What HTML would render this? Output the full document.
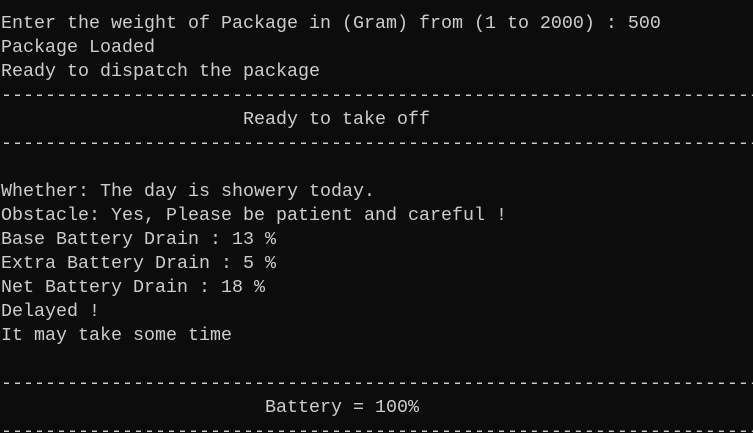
<!DOCTYPE html>
<html><head><meta charset="utf-8"><style>
html,body{margin:0;padding:0;background:#0c0c0c;width:753px;height:433px;overflow:hidden}
pre{margin:0;padding:12px 0 0 1px;font-family:"Liberation Mono",monospace;font-size:18.33px;line-height:24px;color:#cccccc;white-space:pre;overflow:hidden}
</style></head><body><pre>Enter the weight of Package in (Gram) from (1 to 2000) : 500
Package Loaded
Ready to dispatch the package
---------------------------------------------------------------------
                      Ready to take off
---------------------------------------------------------------------

Whether: The day is showery today.
Obstacle: Yes, Please be patient and careful !
Base Battery Drain : 13 %
Extra Battery Drain : 5 %
Net Battery Drain : 18 %
Delayed !
It may take some time

---------------------------------------------------------------------
                        Battery = 100%
---------------------------------------------------------------------</pre></body></html>
